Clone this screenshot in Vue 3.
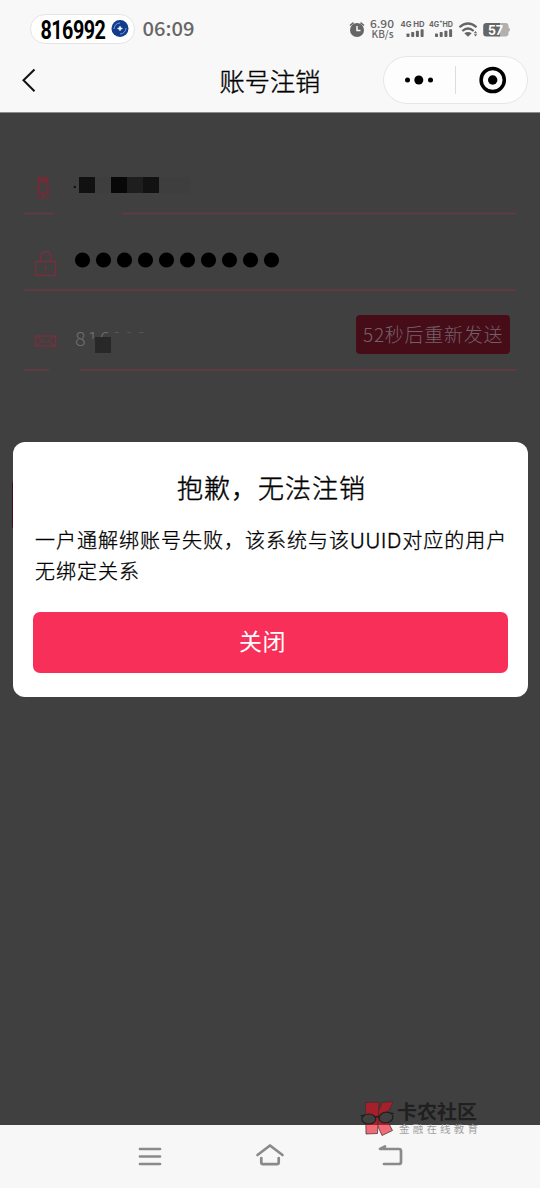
<script setup>
const redactions = [
  { x: 79, w: 16, c: '#111' },
  { x: 95, w: 16, c: '#3e3e3e' },
  { x: 111, w: 16, c: '#080808' },
  { x: 127, w: 16, c: '#1e1e1e' },
  { x: 143, w: 16, c: '#121212' },
  { x: 159, w: 32, c: '#3e3e3e' }
]
const signalBars = [0, 1, 2, 3]
</script>

<template>
  <div class="phone">
    <header class="top">
      <div class="status">
        <div class="pill">
          <svg width="105" height="30" viewBox="0 0 105 30">
            <text class="code" transform="translate(10.5 24.7) scale(.76 1)" textLength="86" lengthAdjust="spacing">816992</text>
            <circle cx="90" cy="14.5" r="8.5" fill="#123d8c" />
            <path d="M84 15a6 6 0 0 1 6-6M96 14a6 6 0 0 1-6 6" fill="none" stroke="#7f9bd0" stroke-width="1" />
            <path d="M90 12l.8 1.700 1.700.8-1.700.8-.8 1.700-.8-1.700-1.700-.8 1.700-.8z" fill="#fff" stroke="#fff" stroke-width=".5" />
          </svg>
        </div>
        <svg class="indicators" width="400" height="40" viewBox="140 10 400 40">
          <text class="clock" x="142.5" y="35.5" textLength="52" lengthAdjust="spacingAndGlyphs">06:09</text>
          <g fill="#666">
            <circle cx="357" cy="30" r="7" />
            <path d="M350 25.500l3.500-2.800M364 25.500l-3.500-2.800" stroke="#666" stroke-width="1.600" />
            <path d="M357 26v4.500h3.500" fill="none" stroke="#f8f8f8" stroke-width="1.500" />
            <text class="rate" x="370" y="27.800" textLength="24" lengthAdjust="spacingAndGlyphs">6.90</text>
            <text class="rate unit" x="371.500" y="37.500" textLength="22" lengthAdjust="spacingAndGlyphs">KB/s</text>
            <text class="net" x="400.500" y="27" textLength="24" lengthAdjust="spacingAndGlyphs">4G HD</text>
            <text class="net" x="429" y="27" textLength="24" lengthAdjust="spacingAndGlyphs">4G⁺HD</text>
            <g v-for="b in signalBars" :key="b">
              <rect :x="406.5 + b * 4.7" :y="33.5 - b * 1.4" width="3" :height="3.500 + b * 1.4" rx=".7" />
              <rect :x="435 + b * 4.7" :y="33.5 - b * 1.4" width="3" :height="3.500 + b * 1.4" rx=".7" />
            </g>
            <g fill="none" stroke="#666" stroke-width="2.200">
              <path d="M459.500 27.300q8.500-7.600 17 0" />
              <path d="M462.300 31q5.700-5 11.400 0" />
            </g>
            <path d="M464.300 33.200q3.700-2.600 7.400 0L468 36.800z" />
            <path d="M473.800 33.300l1.700-2.200 1.700 2.200zM473.800 34.300l1.700 2.200 1.700-2.200z" />
            <path d="M498 23h7.500a3 3 0 0 1 3 3v1.500q1.500.6 1.500 2.200t-1.500 2.200V33.500a3 3 0 0 1-3 3H498z" fill="#b0b0b0" />
            <path d="M486.500 23H500v13.500h-13.500a3.300 3.300 0 0 1-3.300-3.300v-6.900a3.300 3.300 0 0 1 3.300-3.300z" />
            <text class="level" x="488" y="34.500" textLength="15" lengthAdjust="spacingAndGlyphs">57</text>
          </g>
        </svg>
      </div>
      <div class="navbar">
        <svg class="back" width="18" height="26" viewBox="0 0 18 26">
          <path d="M14.500 2.500L3.500 13.300l11 10.900" fill="none" stroke="#111" stroke-width="2" />
        </svg>
        <h1>账号注销</h1>
        <div class="capsule">
          <svg width="143" height="46" viewBox="0 0 143 46">
            <circle cx="23.500" cy="23" r="2.500" />
            <circle cx="34.800" cy="23" r="4.500" />
            <circle cx="46.500" cy="23" r="2.500" />
            <path d="M71.500 9v28" stroke="#ddd" />
            <circle cx="108.700" cy="23" r="11.600" fill="none" stroke="#000" stroke-width="3.500" />
            <circle cx="108.700" cy="23" r="4.700" />
          </svg>
        </div>
      </div>
    </header>

    <main class="page">
      <svg class="form" width="540" height="267" viewBox="0 113 540 267">
        <path d="M24 213.500h30M122 213.500h394M24 290.200h492M24 369.700h25M80 369.700h436" fill="none" stroke="#683942" stroke-width="1.500" />
        <g fill="none" stroke="#7a2f3e" stroke-width="1.300">
          <path d="M37.500 177h10.500v5.500h1v14.500a2 2 0 0 1-2 2h-7.500a2 2 0 0 1-2-2zM40 182l6.500 1.500V192H40z" fill="#6e2c38" fill-rule="evenodd" stroke="none" />
          <rect x="39" y="194" width="8.500" height="3.700" fill="#404040" stroke="none" />
          <path d="M43.200 194.500v2.500" />
          <rect x="35.700" y="261.500" width="20" height="14" rx="1" />
          <path d="M40.700 261.500V256.500a5 5 0 0 1 10 0V261.500" />
          <path d="M45.700 266v5" />
          <rect x="35.700" y="336" width="20" height="10" />
          <path d="M36 336L45.700 342.500L55.400 336M36 346L43 341M55.400 346L48.400 341" stroke-width="1" />
        </g>
        <circle cx="74.800" cy="187" r="1.200" fill="#111" />
        <rect v-for="r in redactions" :key="r.x" :x="r.x" y="177" :width="r.w" height="16" :fill="r.c" />
        <circle v-for="n in 10" :key="n" :cx="61.500 + n * 21" cy="260" r="7.600" fill="#000" />
        <text class="mail" x="75" y="345.500" textLength="72">816992</text>
        <path d="M88 343l6-5h9l6-5.500h41v18H88z" fill="#404040" />
        <rect x="95" y="337" width="16" height="16" fill="#282828" />
        <rect x="356" y="315" width="154" height="39" rx="4" fill="#460d19" />
        <text class="resend" x="363" y="341.500" textLength="139.500">52秒后重新发送</text>
      </svg>
      <div class="submit"></div>

      <section class="dialog">
        <h2>抱歉，无法注销</h2>
        <p>一户通解绑账号失败，该系统与该<span class="latin">UUID</span>对应的用户无绑定关系</p>
        <button>关闭</button>
      </section>
    </main>

    <footer class="softkeys">
      <svg width="540" height="63" viewBox="0 1125 540 63">
        <g fill="none" stroke="#8a8a8a" stroke-width="2.700" stroke-linecap="round" stroke-linejoin="round">
          <path d="M140 1149h20M140 1156.500h20M140 1164h20" />
          <path d="M257.500 1155l12.500-9.500 12.500 9.500M261.300 1158v4.500q0 1.700 1.700 1.700h14q1.700 0 1.700-1.700V1158" />
          <path d="M385 1146.500l-5 2.500h19q2 0 2 2v11q0 2-2 2h-15" />
        </g>
      </svg>
    </footer>

    <svg class="watermark" width="130" height="44" viewBox="360 1094 130 44">
      <defs>
        <linearGradient id="wm-red" x1="0" y1="1098" x2="0" y2="1138" gradientUnits="userSpaceOnUse">
          <stop offset=".675" stop-color="#a5202b" />
          <stop offset=".675" stop-color="#f06b76" />
        </linearGradient>
      </defs>
      <g fill="url(#wm-red)" stroke="#3a2c2e" stroke-width=".7">
        <path d="M382 1102.500L393.500 1101.500L385.500 1117L392.500 1130.500L382 1135.500L375 1120Z" />
        <path d="M365.500 1102.500L379 1102L377.500 1133.500L366 1134Z" />
      </g>
      <g fill="#404040" stroke="#1e1e1e" stroke-width="1.200">
        <ellipse cx="368.800" cy="1119" rx="7" ry="5" />
        <ellipse cx="386" cy="1117.500" rx="7" ry="5.300" transform="rotate(-8 386 1117.500)" />
        <path d="M360.500 1116l4-1M375 1117.500q2.500-2 4.500 0M390.500 1113l3.500.5" fill="none" />
      </g>
      <text class="brand" x="397" y="1118.500" textLength="80" lengthAdjust="spacingAndGlyphs">卡农社区</text>
      <text class="tagline" x="399" y="1132.500" textLength="79">金融在线教育</text>
    </svg>
  </div>
</template>

<style>
body { margin: 0; }
</style>

<style scoped>
.phone {
  position: relative;
  width: 540px;
  height: 1188px;
  display: flex;
  flex-direction: column;
  overflow: hidden;
  font-family: "Noto Sans CJK SC", sans-serif;
  color: #000;
}
svg { display: block; }
.top {
  height: 113px;
  background: #f8f8f8;
  border-bottom: 1px solid #8b8b8b;
  box-sizing: border-box;
}
.status {
  height: 56px;
  display: flex;
  align-items: flex-start;
  padding-left: 30px;
}
.pill {
  box-sizing: border-box;
  width: 105px;
  height: 30px;
  margin-top: 14px;
  border: 1px solid #e4e4e4;
  border-radius: 15px;
  background: #fff;
}
.pill svg { margin: -1px; }
.indicators { margin: 10px 0 0 5px; flex: none; }
.code { font: 700 26px Roboto, sans-serif; }
.clock { font: 500 19px "Noto Sans CJK SC", sans-serif; fill: #666; }
.rate { font: 500 11px "Noto Sans CJK SC", sans-serif; }
.unit { font-size: 10px; }
.net { font: 700 8px Inter, "Noto Sans", sans-serif; }
.level { font: 700 13px Inter, sans-serif; fill: #fff; }
.navbar {
  height: 48px;
  display: grid;
  grid-template-columns: 190px 1fr 145px;
  align-items: center;
  padding: 0 12px 0 20px;
}
h1 {
  margin: 0;
  padding-left: 9.5px;
  font-size: 25.2px;
  line-height: 36px;
  font-weight: 300;
  -webkit-text-stroke: .4px #000;
}
.capsule {
  box-sizing: border-box;
  width: 145px;
  height: 48px;
  border: 1px solid #e6e6e6;
  border-radius: 24px;
  background: #fdfdfd;
}
.page {
  position: relative;
  height: 1012px;
  background: #404040;
}
.mail { font-size: 20px; fill: #6c6c6c; font-weight: 300; }
.resend { font-size: 19px; fill: #746168; font-weight: 300; }
.submit {
  position: absolute;
  left: 12px;
  top: 366px;
  width: 516px;
  height: 52px;
  border-radius: 5px;
  background: #460d19;
}
.dialog {
  position: absolute;
  left: 13px;
  top: 329px;
  width: 515px;
  height: 255px;
  box-sizing: border-box;
  padding: 25px 20px 24px;
  border-radius: 12px;
  background: #fff;
  display: flex;
  flex-direction: column;
}
h2 {
  margin: 0 0 0 2px;
  font-size: 26px;
  letter-spacing: 1px;
  line-height: 40px;
  font-weight: 300;
  -webkit-text-stroke: .4px #000;
  text-align: center;
}
p {
  margin: 18px 0 0 2px;
  font-size: 20px;
  letter-spacing: 1px;
  line-height: 30px;
  width: 476px;
  font-weight: 300;
  -webkit-text-stroke: .3px #000;
}
.latin { font-family: Inter, sans-serif; letter-spacing: .8px; }
button {
  margin-top: auto;
  height: 61px;
  flex: none;
  border: 0;
  border-radius: 7px;
  background: #f83059;
  color: #fff;
  font: 400 23px "Noto Sans CJK SC", sans-serif;
  letter-spacing: .5px;
  padding: 0 16px 6px 0;
}
.softkeys { height: 63px; background: #f7f7f7; }
.watermark { position: absolute; left: 360px; top: 1094px; }
.brand { font-size: 19.500px; font-weight: 700; fill: #202020; }
.tagline { font-size: 10.500px; fill: #a0a0a0; }
</style>
